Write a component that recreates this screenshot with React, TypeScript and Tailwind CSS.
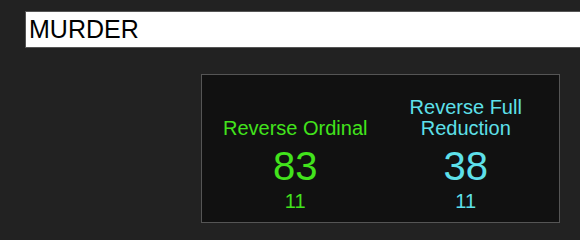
const CIPHERS = [
  { label: ["Reverse Ordinal"], value: 83, reduced: 11, color: "text-[#42e31c]" },
  { label: ["Reverse Full", "Reduction"], value: 38, reduced: 11, color: "text-[#5ee0ea]" },
];

export default function App() {
  return (
    <div className="w-[580px] h-[240px] overflow-hidden bg-[#222222] font-['Liberation_Sans',Arial,sans-serif]">
      <div className="pt-[11px] pl-[25px]">
        <input
          defaultValue="MURDER"
          className="block w-[600px] h-[37px] bg-white border border-[#555555] pl-[3px] text-[25px] text-black outline-none"
        />
      </div>
      <div className="mt-[26px] ml-[201px] w-[359px] h-[149px] bg-[#111111] border border-[#555555] px-[8px] flex items-end pb-[9px]">
        {CIPHERS.map((c) => (
          <div key={c.value} className={`w-[171px] flex flex-col items-center text-center ${c.color}`}>
            <div className="mb-[4px]">
              {c.label.map((l) => (
                <div key={l} className="text-[20px] leading-[21px]">{l}</div>
              ))}
            </div>
            <div className="text-[40px] leading-[46px]">{c.value}</div>
            <div className="text-[20px] leading-[24px]">{c.reduced}</div>
          </div>
        ))}
      </div>
    </div>
  );
}
